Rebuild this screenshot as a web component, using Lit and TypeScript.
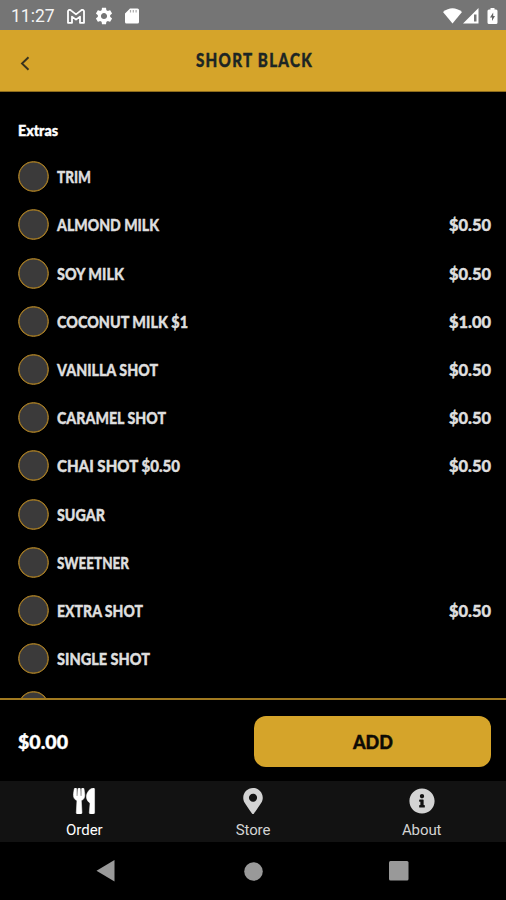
import { LitElement, html, css, svg } from "lit";
import { customElement, property } from "lit/decorators.js";

/** A line of display lettering set to a given measure. */
@customElement("display-text")
class DisplayText extends LitElement {
  @property() text = "";
  @property({ type: Number }) measure = 100;
  @property({ type: Number }) size = 17;

  static styles = css`
    :host { display: block; line-height: 0; }
    svg { display: block; overflow: visible; }
    text {
      font-family: Lato, "Liberation Sans", sans-serif; font-weight: 900;
      fill: currentColor; stroke: currentColor; stroke-width: 0.4px;
    }
  `;

  render() {
    const h = 20;
    const baseline = h / 2 + this.size * 0.36;
    return html`<svg width=${this.measure} height=${h}>
      <text x="0" y=${baseline} font-size=${this.size} textLength=${this.measure}
        lengthAdjust="spacingAndGlyphs">${this.text}</text>
    </svg>`;
  }
}

interface Extra { name: string; width: number; price?: string; }

const EXTRAS: Extra[] = [
  { name: "TRIM", width: 34 },
  { name: "ALMOND MILK", width: 102, price: "$0.50" },
  { name: "SOY MILK", width: 67, price: "$0.50" },
  { name: "COCONUT MILK $1", width: 131, price: "$1.00" },
  { name: "VANILLA SHOT", width: 101, price: "$0.50" },
  { name: "CARAMEL SHOT", width: 109, price: "$0.50" },
  { name: "CHAI SHOT $0.50", width: 123, price: "$0.50" },
  { name: "SUGAR", width: 48 },
  { name: "SWEETNER", width: 72 },
  { name: "EXTRA SHOT", width: 86, price: "$0.50" },
  { name: "SINGLE SHOT", width: 93 },
  { name: "", width: 0 },
];

const utensils = svg`<path d="M207.9 15.2c.8 4.7 16.1 94.5 16.1 128.8 0 52.3-27.8 89.6-68.9 104.6L168 486.7c.7 13.7-10.2 25.3-24 25.3H80c-13.7 0-24.7-11.5-24-25.3l12.9-238.1C27.7 233.6 0 196.2 0 144 0 109.6 15.3 19.9 16.1 15.2 19.3-5.1 61.4-5.4 64 16.3v141.2c1.3 3.4 15.1 3.2 16 0 1.4-25.3 7.9-139.2 8-141.8 3.3-20.8 44.7-20.8 47.9 0 .2 2.7 6.6 116.5 8 141.8.9 3.2 14.8 3.4 16 0V16.3c2.6-21.6 44.8-21.4 48-1.1zm119.2 285.7l-15 185.1c-1.2 14 9.9 26 23.9 26h56c13.3 0 24-10.7 24-24V24c0-13.2-10.7-24-24-24-82.5 0-221.4 178.5-64.9 300.9z" stroke="currentColor" stroke-width="10"/>`;
const marker = svg`<path d="M172.268 501.67C26.97 291.031 0 269.413 0 192 0 85.961 85.961 0 192 0s192 85.961 192 192c0 77.413-26.97 99.031-172.268 309.67-9.535 13.774-29.93 13.773-39.464 0zM192 272c44.183 0 80-35.817 80-80s-35.817-80-80-80-80 35.817-80 80 35.817 80 80 80z"/>`;
const info = svg`<path d="M256 8C119.043 8 8 119.083 8 256c0 136.997 111.043 248 248 248s248-111.003 248-248C504 119.083 392.957 8 256 8zm0 110c23.196 0 42 18.804 42 42s-18.804 42-42 42-42-18.804-42-42 18.804-42 42-42zm56 254c0 6.627-5.373 12-12 12h-88c-6.627 0-12-5.373-12-12v-24c0-6.627 5.373-12 12-12h12v-64h-12c-6.627 0-12-5.373-12-12v-24c0-6.627 5.373-12 12-12h64c6.627 0 12 5.373 12 12v100h12c6.627 0 12 5.373 12 12v24z"/>`;

const TABS = [
  { label: "Order", icon: utensils, box: "0 0 416 512", active: true },
  { label: "Store", icon: marker, box: "0 0 384 512", active: false },
  { label: "About", icon: info, box: "0 0 512 512", active: false },
];

@customElement("app-root")
class AppRoot extends LitElement {
  static styles = css`
    :host {
      display: flex; flex-direction: column; width: 100%; height: 900px;
      background: #000; overflow: hidden; font-family: Roboto, sans-serif;
    }
    * { box-sizing: border-box; }
    svg { display: block; }
    .status {
      flex: none; height: 30px; background: #757575; color: #fff;
      display: flex; align-items: center; justify-content: space-between;
      padding: 2px 8px 0 11px;
    }
    .group { display: flex; align-items: center; }
    .clock { font-size: 17.5px; line-height: 20px; width: 56px; color: #f4f4f4; }
    .mail { margin-right: 10px; }
    .gear { margin-right: 12px; }
    .cell { margin: 0 8px 0 1px; }
    .header {
      flex: none; height: 62px; background: #d5a42a; color: #1c2524;
      display: grid; grid-template-columns: 1fr auto 1fr; align-items: center;
      padding-left: 20px; border-bottom: 1px solid #8d6c1d;
    }
    .title { margin-left: -18px; padding-top: 1px; letter-spacing: 1.5px; }
    .back { padding-top: 5px; }
    .content { flex: 1; min-height: 0; overflow: hidden; padding: 27.5px 15px 0 18px; color: #dedede; }
    .heading { color: #fff; margin-bottom: 13.2px; }
    .row { height: 48.2px; display: flex; align-items: center; gap: 8px; }
    .radio {
      flex: none; width: 31px; height: 31px; border-radius: 50%;
      background: #3b3a3a; border: 1px solid #a77c22; box-shadow: inset 0 0 0 0.5px #a77c22;
    }
    .label { flex: 1; padding-top: 1px; }
    .price { padding-top: 1px; }
    .checkout {
      flex: none; height: 83px; border-top: 2px solid #a17a20; color: #fff;
      display: flex; align-items: center; justify-content: space-between; padding: 2px 15px 0 18px;
    }
    .add {
      width: 237px; height: 51px; border: 0; padding: 0; border-radius: 12px;
      background: #d5a42a; color: #0d0b05; display: flex; align-items: center; justify-content: center;
    }
    .tabs { flex: none; height: 61px; background: #121212; display: grid; grid-template-columns: repeat(3, 1fr); }
    .tab {
      display: flex; flex-direction: column; align-items: center; padding-top: 7px; gap: 6px;
      color: #d3d3d3; fill: currentColor; font-size: 15px; line-height: 20px; letter-spacing: -0.1px;
    }
    .active { color: #fff; letter-spacing: 0; }
    .nav { flex: none; height: 58px; display: grid; grid-template-columns: 211px 84px 1fr; fill: #999; }
    .key { display: flex; align-items: center; justify-content: center; }
    .recent { padding-right: 3px; }
  `;

  render() {
    return html`
      <div class="status">
        <div class="group">
          <span class="clock">11:27</span>
          <svg class="mail" width="18" height="15" viewBox="0 0 18 15" fill="none" stroke="#fff" stroke-width="1.8" stroke-linejoin="round">
            <path d="M1 2.2Q2-.3 4.2 1.6L9 5.4l4.800-3.800Q16-.3 17 2.200V13.800H13V7.600L9 10.600 5 7.600v6.200H1z"/>
          </svg>
          <svg class="gear" width="18" height="18" viewBox="1.500 1.500 21 21" fill="#fff">
            <path d="M19.140 12.940c.04-.3.060-.61.060-.94 0-.32-.02-.64-.07-.94l2.030-1.580c.18-.14.230-.41.120-.61l-1.920-3.320c-.12-.22-.37-.29-.59-.22l-2.390.960c-.5-.38-1.030-.7-1.620-.94l-.36-2.540c-.04-.24-.24-.41-.48-.41h-3.840c-.24 0-.43.170-.47.410l-.36 2.540c-.59.240-1.130.570-1.620.940l-2.390-.96c-.22-.08-.47 0-.59.220L2.740 8.870c-.12.210-.08.470.120.610l2.030 1.580c-.05.300-.09.630-.09.940s.020.640.070.940l-2.030 1.580c-.18.140-.23.410-.12.610l1.920 3.320c.12.220.370.290.590.220l2.390-.96c.5.380 1.030.700 1.620.940l.36 2.540c.05.240.240.410.480.410h3.840c.24 0 .44-.17.470-.41l.36-2.540c.59-.24 1.130-.56 1.620-.94l2.390.960c.22.080.470 0 .59-.22l1.920-3.320c.12-.22.070-.47-.12-.61l-2.010-1.580zM12 15.600c-1.980 0-3.600-1.620-3.600-3.600s1.620-3.600 3.600-3.600 3.600 1.620 3.600 3.600-1.620 3.600-3.600 3.600z"/>
          </svg>
          <svg width="14" height="16" viewBox="0 0 14 16">
            <path fill="#fff" d="M5 .5h7.500A1.500 1.500 0 0 1 14 2v12a1.500 1.500 0 0 1-1.500 1.500h-11A1.500 1.500 0 0 1 0 14V5.500z"/>
            <path stroke="#aaa" stroke-width="1.200" d="M5.500 2v2.500M8.300 2v2.500M11.100 2v2.500"/>
          </svg>
        </div>
        <div class="group">
          <svg width="19" height="16" viewBox="0 0 19 16" fill="#fff"><path d="M0 4Q9.500-3.500 19 4L9.500 15.500z"/></svg>
          <svg class="cell" width="16" height="16" viewBox="0 0 16 16"><path fill="#fff" d="M0 15.500 15.500 0v15.500z"/><path fill="#757575" d="M11 6.500h2.500v7H11z"/></svg>
          <svg width="11" height="16" viewBox="0 0 11 16"><path fill="#fff" d="M3.500 0h4v1.500H9A1.500 1.500 0 0 1 10.500 3v11.500A1.500 1.500 0 0 1 9 16H2A1.500 1.500 0 0 1 .5 14.500V3A1.500 1.500 0 0 1 2 1.500h1.500z"/><path fill="#666" d="M6.200 4.500 3 9.500h2v3.500l3-5H6.200z"/></svg>
        </div>
      </div>
      <div class="header">
        <svg class="back" width="10" height="20" viewBox="0 0 10 15" fill="none" stroke="#38331e" stroke-width="1.900"><path d="M8.500 1.200 2 7.500l6.500 6.300"/></svg>
        <display-text class="title" text="SHORT BLACK" .measure=${117} .size=${18}></display-text>
      </div>
      <div class="content">
        <display-text class="heading" text="Extras" .measure=${40} .size=${15.5}></display-text>
        ${EXTRAS.map((e) => html`
          <div class="row">
            <span class="radio"></span>
            ${e.name ? html`<display-text class="label" .text=${e.name} .measure=${e.width} .size=${17}></display-text>` : ""}
            ${e.price ? html`<display-text class="price" .text=${e.price} .measure=${42} .size=${17}></display-text>` : ""}
          </div>`)}
      </div>
      <div class="checkout">
        <display-text text="$0.00" .measure=${50} .size=${19.5}></display-text>
        <button class="add"><display-text text="ADD" .measure=${40} .size=${19}></display-text></button>
      </div>
      <div class="tabs">
        ${TABS.map((t) => html`
          <div class="tab ${t.active ? "active" : ""}">
            <svg width="26" height="26" viewBox=${t.box}>${t.icon}</svg>
            <span>${t.label}</span>
          </div>`)}
      </div>
      <div class="nav">
        <div class="key"><svg width="19" height="22" viewBox="0 0 19 22"><path d="M18.500 0v21.500L.5 10.800z"/></svg></div>
        <div class="key"><svg width="19" height="19" viewBox="0 0 19 19"><circle cx="9.500" cy="9.500" r="9.300"/></svg></div>
        <div class="key recent"><svg width="20" height="20" viewBox="0 0 20 20"><rect width="19.500" height="19.500" rx="1.500"/></svg></div>
      </div>
    `;
  }
}
